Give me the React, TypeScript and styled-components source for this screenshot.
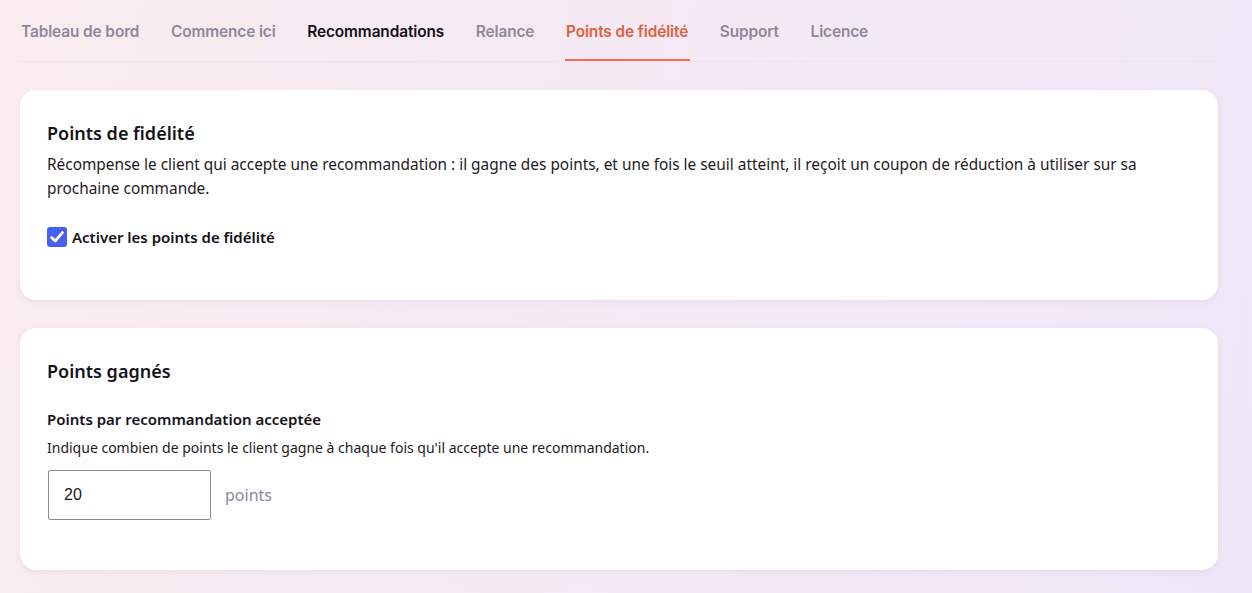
import React from "react";
import styled, { createGlobalStyle } from "styled-components";

const Global = createGlobalStyle`
  html, body { margin: 0; padding: 0; }
  body {
    min-height: 593px;
    background: linear-gradient(100deg, #faecee 0%, #f5eaf4 45%, #efe6f8 100%);
    font-family: "Noto Sans", "Open Sans", sans-serif;
    color: #1d1a22;
  }
`;

const Page = styled.div`
  padding: 0 34px 0 20px;
  display: flex;
  flex-direction: column;
  gap: 28px;
`;

const Nav = styled.nav`
  display: flex;
  gap: 28.6px;
  border-bottom: 1px solid #f0e4ec;
  height: 61px;
`;

const Tab = styled.a<{ $active?: boolean; $strong?: boolean }>`
  display: flex;
  align-items: center;
  padding: 3px 2px 0 1px;
  height: 61px;
  box-sizing: border-box;
  font-family: "Inter", sans-serif;
  font-size: 15.4px;
  font-weight: 600;
  letter-spacing: -0.1px;
  color: ${(p) => (p.$active ? "#e0613f" : p.$strong ? "#121018" : "#8f879c")};
  border-bottom: 2px solid ${(p) => (p.$active ? "#ef6f4e" : "transparent")};
  margin-bottom: -1px;
  cursor: pointer;
`;

const Card = styled.section<{ $h: number }>`
  background: #fff;
  border-radius: 16px;
  box-shadow: 0 2px 6px rgba(120, 90, 160, 0.08);
  padding: 30px 27px 0;
  height: ${(p) => p.$h}px;
  box-sizing: border-box;
`;

const Title = styled.h2<{ $mb: number }>`
  margin: 0 0 ${(p) => p.$mb}px;
  font-size: 18px;
  line-height: 26px;
  font-weight: 600;
  color: #15121a;
`;

const Desc = styled.p`
  margin: 0;
  font-size: 15.4px;
  line-height: 24px;
  color: #1d1a22;
`;

const CheckRow = styled.label`
  display: flex;
  align-items: center;
  gap: 5px;
  margin-top: 26px;
  font-size: 15px;
  font-weight: 600;
  color: #15121a;
`;

const Box = styled.span`
  width: 20px;
  height: 20px;
  border-radius: 3px;
  background: #4360ee;
  display: inline-flex;
  align-items: center;
  justify-content: center;
`;

const FieldLabel = styled.div`
  font-size: 15px;
  font-weight: 600;
  line-height: 22px;
  color: #15121a;
`;

const Help = styled.div`
  font-size: 14px;
  line-height: 20px;
  margin-top: 8px;
  color: #1d1a22;
`;

const InputRow = styled.div`
  display: flex;
  align-items: center;
  gap: 14px;
  margin: 12px 0 0 1px;
`;

const Input = styled.input`
  width: 163px;
  height: 50px;
  box-sizing: border-box;
  border: 1px solid #8d8a92;
  border-radius: 2px;
  padding: 0 15px;
  font-family: "Liberation Sans", Arial, sans-serif;
  font-size: 16px;
  color: #1a1a1a;
  outline: none;
`;

const Unit = styled.span`
  font-size: 16px;
  color: #8f879c;
`;

export default function App() {
  const tabs = [
    { label: "Tableau de bord" },
    { label: "Commence ici" },
    { label: "Recommandations", strong: true },
    { label: "Relance" },
    { label: "Points de fidélité", active: true },
    { label: "Support" },
    { label: "Licence" },
  ];
  return (
    <>
      <Global />
      <Page>
        <Nav>
          {tabs.map((t) => (
            <Tab key={t.label} $active={t.active} $strong={t.strong}>
              {t.label}
            </Tab>
          ))}
        </Nav>
        <Card $h={210}>
          <Title $mb={7}>Points de fidélité</Title>
          <Desc>
            Récompense le client qui accepte une recommandation : il gagne des points, et une fois le seuil atteint, il
            reçoit un coupon de réduction à utiliser sur sa prochaine commande.
          </Desc>
          <CheckRow>
            <Box>
              <svg width="16" height="16" viewBox="0 0 16 16">
                <path d="M2.6 8.6 L6.2 12 L13.4 3.6" fill="none" stroke="#fff" strokeWidth="2.8" strokeLinecap="round" strokeLinejoin="round" />
              </svg>
            </Box>
            Activer les points de fidélité
          </CheckRow>
        </Card>
        <Card $h={242}>
          <Title $mb={24}>Points gagnés</Title>
          <FieldLabel>Points par recommandation acceptée</FieldLabel>
          <Help>Indique combien de points le client gagne à chaque fois qu'il accepte une recommandation.</Help>
          <InputRow>
            <Input defaultValue="20" />
            <Unit>points</Unit>
          </InputRow>
        </Card>
      </Page>
    </>
  );
}
